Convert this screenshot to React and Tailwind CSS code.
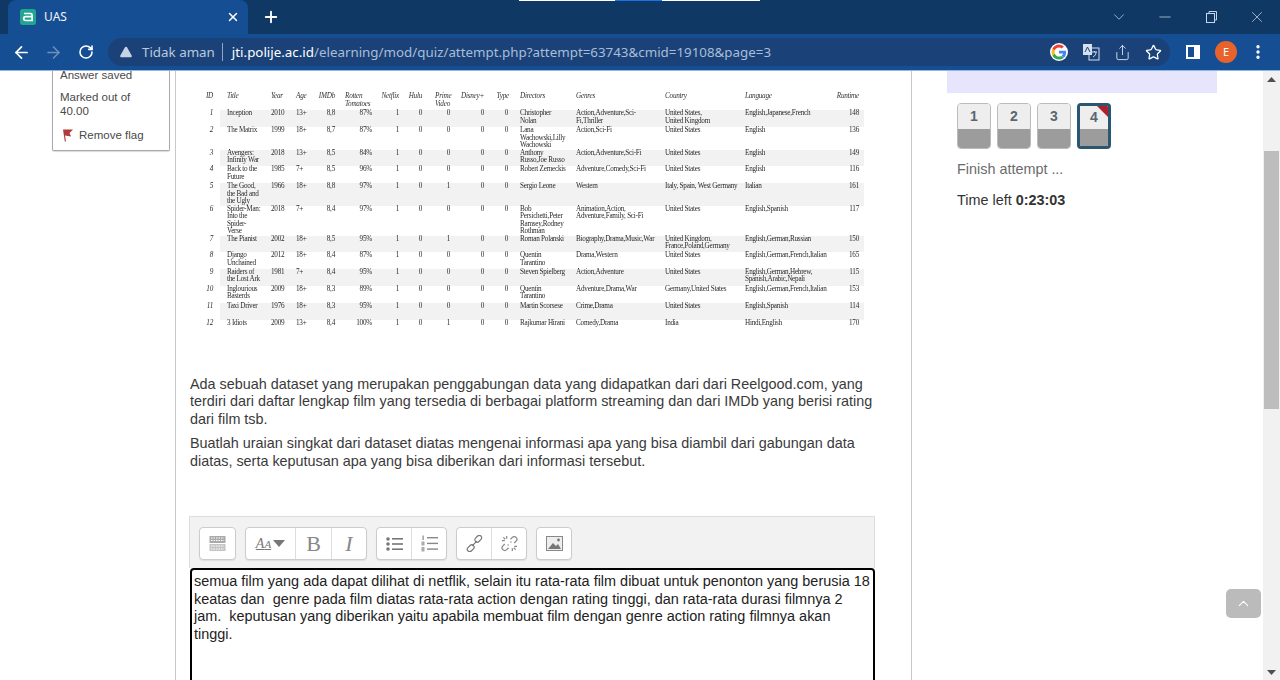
import React from 'react';
import { ArrowLeft, ArrowRight, RotateCw, Plus, X, Minus, ChevronDown, ChevronUp, Star, Share, EllipsisVertical, TriangleAlert } from 'lucide-react';

const rows = [
  [17, '1', 'Inception', '2010', '13+', '8,8', '87%', 1, 0, 0, 0, 0, 'Christopher\nNolan', 'Action,Adventure,Sci-\nFi,Thriller', 'United States,\nUnited Kingdom', 'English,Japanese,French', '148'],
  [22.5, '2', 'The Matrix', '1999', '18+', '8,7', '87%', 1, 0, 0, 0, 0, 'Lana\nWachowski,Lilly\nWachowski', 'Action,Sci-Fi', 'United States', 'English', '136'],
  [16.5, '3', 'Avengers:\nInfinity War', '2018', '13+', '8,5', '84%', 1, 0, 0, 0, 0, 'Anthony\nRusso,Joe Russo', 'Action,Adventure,Sci-Fi', 'United States', 'English', '149'],
  [17, '4', 'Back to the\nFuture', '1985', '7+', '8,5', '96%', 1, 0, 0, 0, 0, 'Robert Zemeckis', 'Adventure,Comedy,Sci-Fi', 'United States', 'English', '116'],
  [22, '5', 'The Good,\nthe Bad and\nthe Ugly', '1966', '18+', '8,8', '97%', 1, 0, 1, 0, 0, 'Sergio Leone', 'Western', 'Italy, Spain, West Germany', 'Italian', '161'],
  [30, '6', 'Spider-Man:\nInto the\nSpider-\nVerse', '2018', '7+', '8,4', '97%', 1, 0, 0, 0, 0, 'Bob\nPersichetti,Peter\nRamsey,Rodney\nRothman', 'Animation,Action,\nAdventure,Family, Sci-Fi', 'United States', 'English,Spanish', '117'],
  [16.5, '7', 'The Pianist', '2002', '18+', '8,5', '95%', 1, 0, 1, 0, 0, 'Roman Polanski', 'Biography,Drama,Music,War', 'United Kingdom,\nFrance,Poland,Germany', 'English,German,Russian', '150'],
  [16.5, '8', 'Django\nUnchained', '2012', '18+', '8,4', '87%', 1, 0, 0, 0, 0, 'Quentin\nTarantino', 'Drama,Western', 'United States', 'English,German,French,Italian', '165'],
  [17, '9', 'Raiders of\nthe Lost Ark', '1981', '7+', '8,4', '95%', 1, 0, 0, 0, 0, 'Steven Spielberg', 'Action,Adventure', 'United States', 'English,German,Hebrew,\nSpanish,Arabic,Nepali', '115'],
  [17.5, '10', 'Inglourious\nBasterds', '2009', '18+', '8,3', '89%', 1, 0, 0, 0, 0, 'Quentin\nTarantino', 'Adventure,Drama,War', 'Germany,United States', 'English,German,French,Italian', '153'],
  [16.5, '11', 'Taxi Driver', '1976', '18+', '8,3', '95%', 1, 0, 0, 0, 0, 'Martin Scorsese', 'Crime,Drama', 'United States', 'English,Spanish', '114'],
  [11, '12', '3 Idiots', '2009', '13+', '8,4', '100%', 1, 0, 1, 0, 0, 'Rajkumar Hirani', 'Comedy,Drama', 'India', 'Hindi,English', '170'],
];

function DataTable() {
  return (
    <table className="table-fixed border-collapse ml-[15px] w-[659px] text-[7.2px] tracking-[-0.25px] leading-[7.5px] text-[#2a2a2a] blur-[0.25px] whitespace-pre font-['Liberation_Serif',serif]">
      <colgroup>
        <col className="w-[15px]" /><col className="w-[47px]" /><col className="w-[25px]" /><col className="w-[21px]" />
        <col className="w-[25px]" /><col className="w-[37px]" /><col className="w-[27px]" /><col className="w-[23px]" />
        <col className="w-[28px]" /><col className="w-[34px]" /><col className="w-[24px]" /><col className="w-[56px]" />
        <col className="w-[89px]" /><col className="w-[80px]" /><col className="w-[90px]" /><col className="w-[38px]" />
      </colgroup>
      <thead>
        <tr className="h-[20px] align-top italic text-[#333]">
          <th className="font-normal text-right pr-[7px] pt-[3px]">ID</th>
          <th className="font-normal text-left pl-[7px] pt-[3px]">Title</th>
          <th className="font-normal text-left pl-[4px] pt-[3px]">Year</th>
          <th className="font-normal text-left pl-[4px] pt-[3px]">Age</th>
          <th className="font-normal text-right pr-[3px] pt-[3px]">IMDb</th>
          <th className="font-normal text-left pl-[7px] pt-[3px]">{'Rotten\nTomatoes'}</th>
          <th className="font-normal text-right pr-[3px] pt-[3px]">Netflix</th>
          <th className="font-normal text-right pr-[3px] pt-[3px]">Hulu</th>
          <th className="font-normal text-left pl-[10px] pt-[3px]">{'Prime\nVideo'}</th>
          <th className="font-normal text-right pr-[3px] pt-[3px]">Disney+</th>
          <th className="font-normal text-right pr-[2px] pt-[3px]">Type</th>
          <th className="font-normal text-left pl-[9px] pt-[3px]">Directors</th>
          <th className="font-normal text-left pl-[9px] pt-[3px]">Genres</th>
          <th className="font-normal text-left pl-[9px] pt-[3px]">Country</th>
          <th className="font-normal text-left pl-[9px] pt-[3px]">Language</th>
          <th className="font-normal text-right pr-[5px] pt-[3px]">Runtime</th>
        </tr>
      </thead>
      <tbody>
        {rows.map((r, i) => (
          <tr key={r[1]} style={{ height: r[0] }} className="align-top">
            <td className="text-right pr-[7px] italic">{r[1]}</td>
            {[
              ['pl-[7px] text-left', r[2]], ['pl-[4px] text-left', r[3]], ['pl-[4px] text-left', r[4]],
              ['pr-[3px] text-right', r[5]], ['pr-[3px] text-right', r[6]], ['pr-[3px] text-right', r[7]],
              ['pr-[3px] text-right', r[8]], ['pr-[3px] text-right', r[9]], ['pr-[3px] text-right', r[10]],
              ['pr-[3px] text-right', r[11]], ['pl-[9px] text-left', r[12]], ['pl-[9px] text-left', r[13]],
              ['pl-[9px] text-left', r[14]], ['pl-[9px] text-left', r[15]], ['pr-[5px] text-right', r[16]],
            ].map(([c, v], j) => (
              <td key={j} className={`${c} ${i % 2 === 0 ? 'bg-[#f2f2f2]' : ''}`}>{v}</td>
            ))}
          </tr>
        ))}
      </tbody>
    </table>
  );
}

function ToolBtn({ children, className = '' }) {
  return <div className={`h-[31px] flex items-center justify-center border-r border-[#ddd] last:border-r-0 ${className}`}>{children}</div>;
}
function ToolGroup({ children }) {
  return <div className="flex bg-white border border-[#ccc] rounded-[4px] shadow-[0_1px_1px_rgba(0,0,0,0.08)]">{children}</div>;
}

function Editor() {
  return (
    <div className="ml-[-1px] w-[686px]">
      <div className="h-[52px] bg-[#f2f2f2] border border-[#ddd] border-b-0 pt-[10px] pl-[9px] flex items-start gap-[9px]">
        <ToolGroup>
          <ToolBtn className="w-[35px]">
            <svg width="17" height="17" viewBox="0 0 17 17"><rect x="0.500" y="1" width="16" height="7" fill="#aaa" /><rect x="0.500" y="9" width="16" height="7" fill="#c4c4c4" /><path d="M2 3h13M2 5.500h13M2 11h13M2 14h13" stroke="#fff" strokeWidth="1" strokeDasharray="1.500 1" /></svg>
          </ToolBtn>
        </ToolGroup>
        <ToolGroup>
          <ToolBtn className="w-[50px] gap-[2px]">
            <span className="italic text-[14px] text-[#777] underline font-['Liberation_Serif',serif] leading-none">A<span className="text-[11px]">A</span></span>
            <svg width="12" height="7" viewBox="0 0 12 7"><path d="M0 0h12L6 7z" fill="#777" /></svg>
          </ToolBtn>
          <ToolBtn className="w-[36px]"><span className="text-[22px] text-[#888] font-['Liberation_Serif',serif] leading-none">B</span></ToolBtn>
          <ToolBtn className="w-[34px]"><span className="text-[22px] italic text-[#888] font-['Liberation_Serif',serif] leading-none">I</span></ToolBtn>
        </ToolGroup>
        <ToolGroup>
          <ToolBtn className="w-[35px]">
            <svg width="17" height="16" viewBox="0 0 17 16" fill="#777"><circle cx="2" cy="3" r="1.800" /><circle cx="2" cy="8" r="1.800" /><circle cx="2" cy="13" r="1.800" /><rect x="6" y="2" width="11" height="1.600" /><rect x="6" y="7.200" width="11" height="1.600" /><rect x="6" y="12.400" width="11" height="1.600" /></svg>
          </ToolBtn>
          <ToolBtn className="w-[34px]">
            <svg width="17" height="17" viewBox="0 0 17 17" fill="#888"><rect x="1.500" y="0.500" width="1.200" height="4.500" /><rect x="0.500" y="6.500" width="3" height="4" fill="#aaa" /><rect x="0.500" y="12" width="3" height="4.500" fill="#aaa" /><rect x="6" y="2" width="11" height="1.400" /><rect x="6" y="7.700" width="11" height="1.400" /><rect x="6" y="13.400" width="11" height="1.400" /></svg>
          </ToolBtn>
        </ToolGroup>
        <ToolGroup>
          <ToolBtn className="w-[35px]">
            <svg width="17" height="17" viewBox="0 0 18 18" fill="none" stroke="#777" strokeWidth="1.300"><rect x="9" y="1.500" width="8" height="5" rx="2.400" transform="rotate(-45 13 4)" /><rect x="1" y="11.500" width="8" height="5" rx="2.400" transform="rotate(-45 5 14)" /><path d="M6.500 11.500l5-5" /></svg>
          </ToolBtn>
          <ToolBtn className="w-[34px]">
            <svg width="17" height="17" viewBox="0 0 18 18" fill="none" stroke="#888" strokeWidth="1.300"><path d="M10 4.500l2-2a2.800 2.800 0 014 4l-2 2M8 13.500l-2 2a2.800 2.800 0 01-4-4l2-2" /><path d="M6 1v3M1 6h3M12 17v-3M17 12h-3M2.500 2.500l2 2M15.500 15.500l-2-2M11 7l-1 1M7 11l1-1" /></svg>
          </ToolBtn>
        </ToolGroup>
        <ToolGroup>
          <ToolBtn className="w-[34px]">
            <svg width="17" height="15" viewBox="0 0 17 15"><rect x="0.500" y="0.500" width="16" height="14" fill="#eee" stroke="#888" /><path d="M2 13l5-6 3 3 2-2 3 5z" fill="#777" /><circle cx="12.500" cy="4" r="1.400" fill="#777" /></svg>
          </ToolBtn>
        </ToolGroup>
      </div>
      <div className="ml-[1px] w-[685px] h-[140px] bg-white border-2 border-black rounded-[4px] pl-[2px] pr-[3px] pt-[3px] text-[14.44px] leading-[17.5px] text-[#222] whitespace-pre-wrap">
        {'semua film yang ada dapat dilihat di netflik, selain itu rata-rata film dibuat untuk penonton yang berusia 18 keatas dan  genre pada film diatas rata-rata action dengan rating tinggi, dan rata-rata durasi filmnya 2 jam.  keputusan yang diberikan yaitu apabila membuat film dengan genre action rating filmnya akan tinggi.'}
      </div>
    </div>
  );
}

function NavBtn({ n, active }) {
  return (
    <div className={`relative w-[34px] h-[46px] rounded-[4px] overflow-hidden flex flex-col box-border ${active ? 'border-[3px] border-[#2b5670]' : 'border border-[#bbb]'}`}>
      <div className="flex-1 bg-[#eeeeee] flex items-center justify-center text-[14px] font-bold text-[#5a6670]">{n}</div>
      <div className={`bg-[#9c9c9c] ${active ? 'h-[17px]' : 'h-[19px]'}`} />
      {active && <svg className="absolute top-0 right-0" width="11" height="11" viewBox="0 0 11 11"><path d="M0 0h11v11z" fill="#b0202a" /></svg>}
    </div>
  );
}

export default function App() {
  return (
    <div className="relative w-[1280px] h-[680px] overflow-hidden flex flex-col bg-white font-['Liberation_Sans',sans-serif]">
      {/* tab strip */}
      <div className="relative h-[34px] bg-[#0f3864] flex items-end shrink-0">
        <div className="ml-[8px] w-[240px] h-[34px] bg-[#164e93] rounded-t-[8px] flex items-center pl-[12px] pr-[8px]">
          <svg width="16" height="16" viewBox="0 0 16 16"><rect width="16" height="16" rx="2.500" fill="#20a58f" /><path d="M4 4.500h6.500a1.600 1.600 0 011.600 1.600v5.400H5.600a1.700 1.700 0 010-3.800h6.400" fill="none" stroke="#fff" strokeWidth="1.700" /></svg>
          <span className="ml-[8px] text-[12px] text-[#f0f4fa] font-['Noto_Sans',sans-serif]">UAS</span>
          <X size={14} strokeWidth={2.500} className="ml-auto text-white" />
        </div>
        <div className="self-center ml-[14px]"><Plus size={18} strokeWidth={2.500} className="text-white" /></div>
        <div className="ml-auto self-center flex items-center gap-[28px] pr-[14px] text-[#c9d5e6]">
          <ChevronDown size={18} strokeWidth={1} />
          <Minus size={18} strokeWidth={1} />
          <svg width="18" height="18" viewBox="0 0 18 18" fill="none" stroke="currentColor"><rect x="4.500" y="5.500" width="8" height="9" /><path d="M7 5.500V3.500h7.500v8.500h-2" /></svg>
          <X size={18} strokeWidth={1} />
        </div>
        <div className="absolute top-0 left-[519px] flex h-[1px]">
          <div className="w-[96px] bg-white" /><div className="w-[47px] bg-[#1a73e8]" /><div className="w-[98px] bg-white" />
        </div>
      </div>
      {/* toolbar */}
      <div className="h-[37px] bg-[#164e93] border-b border-[#8fb6e4] flex items-center shrink-0 text-[#d9e4f2]">
        <ArrowLeft size={19} strokeWidth={2.200} className="ml-[12px] text-white" />
        <ArrowRight size={19} strokeWidth={2} className="ml-[13px] text-[#6f8fbb]" />
        <RotateCw size={16} strokeWidth={2.400} className="ml-[15px] text-white" />
        <div className="ml-[14px] w-[1062px] h-[28px] rounded-full bg-[#1a4278] flex items-center pl-[11px] pr-[8px] font-['Noto_Sans',sans-serif] text-[13.35px]">
          <TriangleAlert size={14} strokeWidth={0} fill="#c7d3e4" />
          <span className="ml-[9px] text-[#b9c9de]">Tidak aman</span>
          <div className="w-px h-[18px] bg-[#8ea6c6] ml-[7px] mr-[9px]" />
          <span className="text-[#a9bdd8]"><span className="text-white">jti.polije.ac.id</span>/elearning/mod/quiz/attempt.php?attempt=63743&amp;cmid=19108&amp;page=3</span>
          <div className="ml-auto flex items-center gap-[14px]">
            <svg width="18" height="18" viewBox="0 0 48 48"><circle cx="24" cy="24" r="24" fill="#fff" /><path d="M43 24.500c0-1.400-.1-2.700-.4-4H24v7.600h10.900a9.300 9.300 0 01-4 6.100l6.200 4.800C40.700 35.700 43 30.600 43 24.500z" fill="#4285f4" /><path d="M24 44c5.400 0 9.900-1.800 13.100-4.800l-6.200-4.800c-1.700 1.200-4 1.900-6.900 1.900-5.200 0-9.700-3.500-11.300-8.300l-6.400 5C9.600 39.500 16.300 44 24 44z" fill="#34a853" /><path d="M12.700 28c-.8-2.600-.8-5.400 0-8l-6.400-5a20 20 0 000 18z" fill="#fbbc05" /><path d="M24 11.900c2.900 0 5.500 1 7.500 2.900l5.600-5.600A19.800 19.800 0 0024 4C16.300 4 9.600 8.500 6.300 15l6.400 5c1.600-4.800 6.100-8.100 11.300-8.100z" fill="#ea4335" /></svg>
            <svg width="18" height="18" viewBox="0 0 18 18"><rect x="1" y="1" width="9" height="11" fill="#d6e0ee" /><rect x="7" y="5" width="10" height="12" fill="none" stroke="#d6e0ee" /><path d="M3 9l2.500-5L8 9" fill="none" stroke="#1a4278" /><path d="M10 9h5M12.500 8v1M11 14c2-1 3-3 3-5" fill="none" stroke="#d6e0ee" /></svg>
            <Share size={17} strokeWidth={1.300} className="text-[#d6e0ee]" />
            <Star size={17} strokeWidth={1.800} className="text-white" />
          </div>
        </div>
        <svg className="ml-[16px]" width="14" height="14" viewBox="0 0 14 14"><rect width="14" height="14" fill="#fff" /><rect x="2" y="2" width="6" height="10" fill="#164e93" /></svg>
        <div className="ml-[15px] w-[22px] h-[22px] rounded-full bg-[#e8622c] text-white text-[11px] flex items-center justify-center font-['Noto_Sans',sans-serif]">E</div>
        <EllipsisVertical size={18} strokeWidth={2.500} className="ml-[12px] text-white" />
      </div>
      {/* page */}
      <div className="flex-1 flex min-h-0">
        <div className="flex-1 flex min-w-0 overflow-hidden">
          <div className="w-[175px] shrink-0 pl-[52px]">
            <div className="-mt-[3px] w-[118px] h-[83px] bg-white border border-[#aaa] rounded-b-[2px] border-t-0 shadow-[0_1px_1px_rgba(0,0,0,0.15)] pl-[7px] pt-0 text-[11.5px] leading-[14px] text-[#4a4a4a]">
              <div className="mb-[8px]">Answer saved</div>
              <div>Marked out of<br />40.00</div>
              <div className="mt-[10px] flex items-center">
                <svg className="ml-[2px]" width="12" height="13" viewBox="0 0 12 13"><path d="M1 0.500h10L7.500 4 9 7.500 3 6.500 4 12.500 2.800 12.500z" fill="#b13b3b" /></svg>
                <span className="ml-[5px]">Remove flag</span>
              </div>
            </div>
          </div>
          <div className="w-[737px] shrink-0 border-x border-[#c8c8c8] pl-[14px] pt-[19px] text-[14.4px] leading-[17.5px] text-[#3a3a3a]">
            <DataTable />
            <p className="mt-[45px] w-[690px]">Ada sebuah dataset yang merupakan penggabungan data yang didapatkan dari dari Reelgood.com, yang terdiri dari daftar lengkap film yang tersedia di berbagai platform streaming dan dari IMDb yang berisi rating dari film tsb.</p>
            <p className="mt-[7px] w-[690px]">Buatlah uraian singkat dari dataset diatas mengenai informasi apa yang bisa diambil dari gabungan data diatas, serta keputusan apa yang bisa diberikan dari informasi tersebut.</p>
            <div className="mt-[46px]"><Editor /></div>
          </div>
          <div className="flex-1 pl-[35px]">
            <div className="w-[270px] h-[22px] bg-[#e7e5fb]" />
            <div className="mt-[10px] pl-[10px] flex gap-[6px]">
              <NavBtn n="1" /><NavBtn n="2" /><NavBtn n="3" /><NavBtn n="4" active />
            </div>
            <div className="mt-[12px] pl-[10px] text-[14.4px] leading-[17px] text-[#6b6b6b]">Finish attempt ...</div>
            <div className="mt-[14px] pl-[10px] text-[14.4px] leading-[17px] text-[#333]">Time left <span className="font-bold">0:23:03</span></div>
          </div>
        </div>
        {/* scrollbar */}
        <div className="w-[17px] shrink-0 bg-[#f1f1f1] flex flex-col items-center relative">
          <svg className="mt-[6px]" width="9" height="5" viewBox="0 0 9 5"><path d="M4.500 0L9 5H0z" fill="#505050" /></svg>
          <div className="mt-[69px] w-[15px] h-[258px] bg-[#bdbdbd]" />
          <svg className="mt-auto mb-[5px]" width="9" height="5" viewBox="0 0 9 5"><path d="M0 0h9L4.500 5z" fill="#505050" /></svg>
        </div>
      </div>
      {/* back to top */}
      <div className="absolute left-[1226px] top-[589px] w-[35px] h-[29px] rounded-[5px] bg-[#bbbbbb] flex items-center justify-center">
        <ChevronUp size={17} strokeWidth={1.500} className="text-white" />
      </div>
    </div>
  );
}
